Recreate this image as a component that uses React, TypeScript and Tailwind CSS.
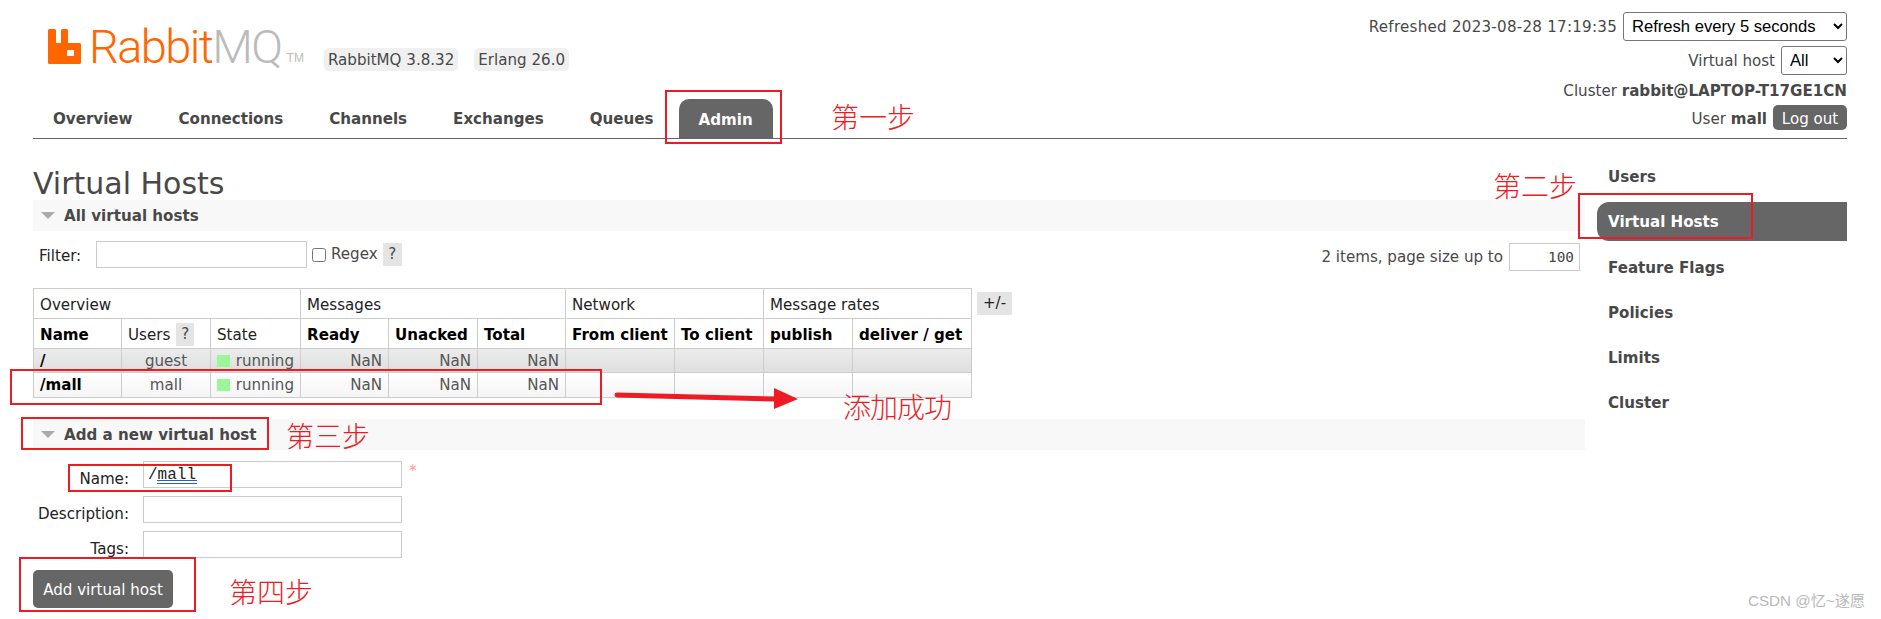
const ann = "absolute text-[28px] leading-none text-[#ed1c24] font-['Noto_Sans_CJK_SC',sans-serif] font-light";
const redBox = "absolute border-2 border-[#ed1c24]";
const th = "border border-[#ccc] px-[6px] pt-[2px] text-left font-bold text-black";
const groupTh = "border border-[#ccc] px-[6px] pt-[2px] text-left font-normal text-[#222]";
const td = "border border-[#ccc] px-[6px] text-[#555]";
const textInput = "h-[27px] w-[259px] border border-[#ccc] bg-white px-[4px] font-['Liberation_Mono',monospace] text-[16px] text-[#222]";

const tabs = ["Overview", "Connections", "Channels", "Exchanges", "Queues"];
const sideNav = ["Feature Flags", "Policies", "Limits", "Cluster"];

function Logo() {
  return (
    <div className="flex items-end h-[34px]">
      <svg width="33" height="35" viewBox="0 0 33 35" className="shrink-0">
        <path
          fillRule="evenodd"
          fill="#ff6600"
          d="M1.5 0H6.5Q8 0 8 1.5V14H13V1.5Q13 0 14.5 0H18.5Q20 0 20 1.5V14H31.5Q33 14 33 15.5V33.5Q33 35 31.5 35H1.5Q0 35 0 33.5V1.5Q0 0 1.5 0ZM19 21V27H26V21Z"
        />
      </svg>
      <span className="ml-[8px] font-['Roboto',sans-serif] font-light text-[47px] leading-[34px] tracking-[-1.6px] text-[#ff6600]">Rabbit</span>
      <span className="font-['Roboto',sans-serif] font-light text-[47px] leading-[34px] tracking-[-1.6px] text-[#bbb]">MQ</span>
      <span className="ml-[5px] font-['Liberation_Sans',sans-serif] text-[12px] leading-[12px] text-[#bbb]">TM</span>
    </div>
  );
}

function Header() {
  return (
    <div className="flex h-[139px] justify-between border-b border-[#666]">
      <div className="flex flex-col">
        <div className="flex h-[78px] items-start pl-[15px] pt-[30px]">
          <Logo />
          <div className="ml-[20px] mt-[18px] flex gap-[16px]">
            <span className="h-[23px] rounded-[5px] bg-[#f0f0f0] px-[4px] leading-[24px]">RabbitMQ 3.8.32</span>
            <span className="h-[23px] rounded-[5px] bg-[#f0f0f0] px-[4px] leading-[24px]">Erlang 26.0</span>
          </div>
        </div>
        <div className="mt-[21px] flex items-end pl-[20px]">
          {tabs.map((t) => (
            <span key={t} className="mr-[46px] pb-[9px] font-bold leading-[20px]">{t}</span>
          ))}
          <span className="-ml-[21px] h-[39px] rounded-t-[10px] bg-[#666] px-[20px] pt-[11px] font-bold leading-[20px] text-white">Admin</span>
        </div>
      </div>
      <div className="flex flex-col items-end pt-[12px]">
        <div className="flex items-center">
          <span className="pt-[2px] tracking-[0.25px]">Refreshed 2023-08-28 17:19:35</span>
          <select className="ml-[6px] h-[29px] w-[224px] rounded-[3px] border border-[#767676] bg-white pl-[4px] font-['Liberation_Sans',sans-serif] text-[16.6px] text-black">
            <option>Refresh every 5 seconds</option>
          </select>
        </div>
        <div className="mt-[5px] flex items-center">
          <span className="pt-[2px]">Virtual host</span>
          <select className="ml-[6px] h-[29px] w-[66px] rounded-[3px] border border-[#767676] bg-white pl-[4px] font-['Liberation_Sans',sans-serif] text-[16.6px] text-black">
            <option>All</option>
          </select>
        </div>
        <div className="mt-[6px] leading-[20px]">Cluster <b>rabbit@LAPTOP-T17GE1CN</b></div>
        <div className="mt-[3px] flex items-center">
          <span className="pt-[4px]">User <b>mall</b></span>
          <span className="ml-[6px] h-[25px] w-[74px] rounded-[5px] bg-[#666] text-center leading-[28px] text-white">Log out</span>
        </div>
      </div>
    </div>
  );
}

function SectionBar({ title }: { title: string }) {
  return (
    <div className="flex h-[31px] items-center bg-[#f8f8f8] pl-[8px] font-bold">
      <span className="h-0 w-0 border-x-[7px] border-t-[7px] border-x-transparent border-t-[#aaa]" />
      <span className="ml-[9px] pt-[1px]">{title}</span>
    </div>
  );
}

function HostRow({ name, user, gradient }: { name: string; user: string; gradient: string }) {
  const h = name === "/" ? "h-[24px]" : "h-[25px]";
  return (
    <tr className={`${h} ${gradient}`}>
      <td className={`${td} font-bold text-black`}>{name}</td>
      <td className={`${td} text-center`}>{user}</td>
      <td className={td}>
        <span className="flex items-center gap-[6px] whitespace-nowrap">
          <span className="h-[12px] w-[13px] bg-[#98f898]" />running
        </span>
      </td>
      <td className={`${td} text-right`}>NaN</td>
      <td className={`${td} text-right`}>NaN</td>
      <td className={`${td} text-right`}>NaN</td>
      <td className={td} />
      <td className={td} />
      <td className={td} />
      <td className={td} />
    </tr>
  );
}

function HostsTable() {
  return (
    <div className="mt-[17px] flex items-start">
      <table className="w-[938px] table-fixed border-collapse leading-[20px]">
        <colgroup>
          <col className="w-[88px]" />
          <col className="w-[89px]" />
          <col className="w-[90px]" />
          <col className="w-[88px]" />
          <col className="w-[89px]" />
          <col className="w-[88px]" />
          <col className="w-[109px]" />
          <col className="w-[89px]" />
          <col className="w-[89px]" />
          <col className="w-[119px]" />
        </colgroup>
        <thead>
          <tr className="h-[30px]">
            <th colSpan={3} className={groupTh}>Overview</th>
            <th colSpan={3} className={groupTh}>Messages</th>
            <th colSpan={2} className={groupTh}>Network</th>
            <th colSpan={2} className={groupTh}>Message rates</th>
          </tr>
          <tr className="h-[30px]">
            <th className={th}>Name</th>
            <th className={`${th} font-normal`}>
              <span className="flex items-center font-normal text-[#222]">
                Users
                <span className="ml-[6px] h-[23px] w-[18px] bg-[#e4e4e4] text-center leading-[23px] text-[#484848]">?</span>
              </span>
            </th>
            <th className={`${th} !font-normal !text-[#222]`}>State</th>
            <th className={th}>Ready</th>
            <th className={`${th} whitespace-nowrap`}>Unacked</th>
            <th className={th}>Total</th>
            <th className={`${th} whitespace-nowrap`}>From client</th>
            <th className={`${th} whitespace-nowrap`}>To client</th>
            <th className={th}>publish</th>
            <th className={`${th} whitespace-nowrap`}>deliver / get</th>
          </tr>
        </thead>
        <tbody>
          <HostRow name="/" user="guest" gradient="bg-gradient-to-b from-[#ececec] to-[#dedede]" />
          <HostRow name="/mall" user="mall" gradient="bg-gradient-to-b from-[#ffffff] to-[#f4f4f4]" />
        </tbody>
      </table>
      <span className="ml-[5px] mt-[4px] h-[23px] w-[35px] bg-[#e4e4e4] text-center leading-[23px] text-[#222]">+/-</span>
    </div>
  );
}

function AddHostForm() {
  return (
    <div className="mt-[11px] flex flex-col gap-[8px]">
      {["Name", "Description", "Tags"].map((label) => (
        <div key={label} className="flex h-[27px] items-start">
          <span className="w-[96px] pt-[8px] text-right leading-[20px] text-[#222]">{label}:</span>
          <div className="relative ml-[14px] flex items-center">
            <input
              readOnly
              spellCheck={false}
              value={label === "Name" ? "/mall" : ""}
              className={textInput}
            />
            {label === "Name" && (
              <>
                <span className="absolute left-[14px] top-[19px] h-[4px] w-[40px] border-y border-[#2a5bd7]" />
                <span className="ml-[7px] -mt-[6px] text-[#f99]">*</span>
              </>
            )}
          </div>
        </div>
      ))}
    </div>
  );
}

export default function App() {
  return (
    <div className="relative h-[619px] w-[1881px] overflow-hidden bg-white pl-[33px] pr-[34px] font-['DejaVu_Sans',sans-serif] text-[15.1px] text-[#484848]">
      <Header />
      <div className="flex">
        <div className="w-[1552px]">
          <h1 className="mt-[28px] h-[33px] text-[30px] font-normal leading-[33px]">Virtual Hosts</h1>
          <SectionBar title="All virtual hosts" />
          <div className="mt-[10px] flex items-start justify-between pl-[6px] pr-[5px]">
            <div className="flex items-center">
              <span className="w-[57px] pt-[3px] text-[#222]">Filter:</span>
              <input readOnly className="h-[27px] w-[211px] border border-[#ccc] bg-white" />
              <input type="checkbox" readOnly className="ml-[5px] h-[14px] w-[14px] appearance-auto" />
              <span className="ml-[5px]">Regex</span>
              <span className="ml-[5px] h-[23px] w-[19px] bg-[#e4e4e4] text-center leading-[23px]">?</span>
            </div>
            <div className="mt-[2px] flex items-center">
              <span>2 items, page size up to</span>
              <input
                readOnly
                value="100"
                className="ml-[6px] h-[28px] w-[71px] border border-[#ccc] bg-white px-[5px] text-right font-['DejaVu_Sans_Mono',monospace] text-[14.4px] text-[#444]"
              />
            </div>
          </div>
          <HostsTable />
          <div className="mt-[21px]">
            <SectionBar title="Add a new virtual host" />
          </div>
          <AddHostForm />
          <button className="mt-[12px] h-[38px] w-[140px] rounded-[5px] bg-[#666] pt-[2px] text-center text-white">Add virtual host</button>
        </div>
        <div className="ml-[12px] flex w-[250px] flex-col pt-[26px] font-bold">
          <span className="pl-[11px] leading-[24px]">Users</span>
          <span className="mt-[13px] h-[39px] rounded-l-[12px] bg-[#666] pl-[11px] leading-[40px] text-white">Virtual Hosts</span>
          {sideNav.map((n, i) => (
            <span key={n} className={`pl-[11px] leading-[24px] ${i === 0 ? "mt-[15px]" : "mt-[21px]"}`}>{n}</span>
          ))}
        </div>
      </div>

      {/* annotations drawn over the screenshot */}
      <div className={`${redBox} left-[665px] top-[90px] h-[54px] w-[117px]`} />
      <div className={`${redBox} left-[1578px] top-[193px] h-[46px] w-[175px]`} />
      <div className={`${redBox} left-[10px] top-[369px] h-[36px] w-[592px]`} />
      <div className={`${redBox} left-[21px] top-[417px] h-[33px] w-[248px]`} />
      <div className={`${redBox} left-[68px] top-[464px] h-[28px] w-[164px]`} />
      <div className={`${redBox} left-[19px] top-[557px] h-[55px] w-[177px]`} />
      <span className={`${ann} left-[831px] top-[102px]`}>第一步</span>
      <span className={`${ann} left-[1493px] top-[171px]`}>第二步</span>
      <span className={`${ann} left-[286px] top-[421px]`}>第三步</span>
      <span className={`${ann} left-[229px] top-[577px]`}>第四步</span>
      <span className={`${ann} left-[843px] top-[392px] tracking-[-1px]`}>添加成功</span>
      <svg className="absolute left-[610px] top-[385px]" width="192" height="28" viewBox="0 0 192 28">
        <path d="M7 10L166 14" stroke="#ed1c24" strokeWidth="5" strokeLinecap="round" fill="none" />
        <path d="M164 3L188 14L164 24Z" fill="#ed1c24" />
      </svg>
      <span className="absolute left-[1748px] top-[592px] font-['Liberation_Sans','Noto_Sans_CJK_SC',sans-serif] text-[15.2px] leading-[18px] text-[#b8b8b8]">CSDN @忆~遂愿</span>
    </div>
  );
}
